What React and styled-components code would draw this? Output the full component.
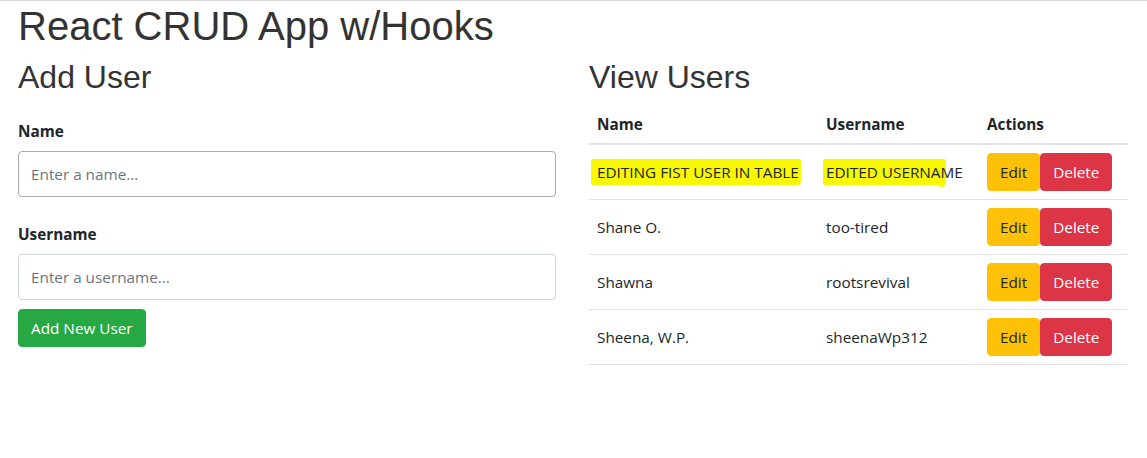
import React from "react";
import styled, { createGlobalStyle } from "styled-components";

const Global = createGlobalStyle`
  html, body { margin: 0; padding: 0; background: #fff; }
  body {
    font-family: "Open Sans", "Noto Sans", sans-serif;
    font-size: 16px;
    line-height: 24px;
    color: #212529;
    border-top: 1px solid #d9d9d9;
  }
  * { box-sizing: border-box; }
`;

const Container = styled.div`
  padding: 0 18px;
  width: 1146px;
`;

const Title = styled.h1`
  margin: 1px 0 8px;
  font-family: "Liberation Sans", Arial, sans-serif;
  font-weight: 400;
  font-size: 40px;
  line-height: 48px;
  color: #333;
`;

const Row = styled.div`
  display: grid;
  grid-template-columns: 538px 539px;
  column-gap: 33px;
`;

const Column = styled.section`
  display: flex;
  flex-direction: column;
`;

const SectionTitle = styled.h2`
  margin: 0 0 6px;
  font-family: "Liberation Sans", Arial, sans-serif;
  font-weight: 400;
  font-size: 32px;
  line-height: 38.4px;
  color: #333;
`;

const Form = styled.form`
  display: flex;
  flex-direction: column;
  padding-top: 17px;
`;

const Group = styled.div`
  display: flex;
  flex-direction: column;
  margin-bottom: ${(p) => p.$mb || 0}px;
`;

const Label = styled.label`
  font-weight: 700;
  font-size: 15.3px;
  margin-bottom: 8px;
`;

const Input = styled.input`
  height: 46px;
  width: 100%;
  padding: 0 12px;
  font-family: inherit;
  font-size: 15.3px;
  color: #495057;
  border: 1px solid ${(p) => (p.$dark ? "#a9a9a9" : "#ced4da")};
  border-radius: 4px;
  background: #fff;
  outline: none;
  &::placeholder { color: #6c757d; }
`;

const Button = styled.button`
  height: 38px;
  padding: 0 12px;
  font-family: inherit;
  font-size: 15.3px;
  line-height: 24px;
  border: 1px solid ${(p) => p.$bg};
  border-radius: 4px;
  background: ${(p) => p.$bg};
  color: ${(p) => p.$fg};
  cursor: pointer;
`;

const SubmitButton = styled(Button)`
  align-self: flex-start;
  margin-top: 9px;
`;

const Table = styled.table`
  width: 539px;
  margin-top: 1px;
  border-collapse: collapse;
  table-layout: fixed;
`;

const Th = styled.th`
  text-align: left;
  font-weight: 700;
  font-size: 15.3px;
  padding: 9px 8px 7px;
  border-bottom: 2px solid #dee2e6;
  width: ${(p) => p.$w}px;
`;

const Td = styled.td`
  padding: 8px;
  font-size: 15.3px;
  vertical-align: middle;
  border-bottom: 1px solid #dee2e6;
  white-space: nowrap;
`;

const Actions = styled.div`
  display: flex;
`;

const Highlight = styled.span`
  position: relative;
  display: inline-block;
  &::before {
    content: "";
    position: absolute;
    z-index: -1;
    left: ${(p) => p.$l}px;
    width: ${(p) => p.$w}px;
    top: -1px;
    bottom: -1px;
    background: #f8f800;
    border-radius: 3px 2px 4px 2px;
  }
  &::after {
    content: "";
    display: ${(p) => (p.$drip ? "block" : "none")};
    position: absolute;
    z-index: -1;
    left: ${(p) => p.$l + p.$w - 9}px;
    width: 9px;
    top: 12px;
    height: 15px;
    background: #f8f800;
    border-radius: 0 0 6px 6px;
  }
`;

const Cell = styled.div`
  position: relative;
  z-index: 0;
`;

const users = [
  { name: "Shane O.", username: "too-tired" },
  { name: "Shawna", username: "rootsrevival" },
  { name: "Sheena, W.P.", username: "sheenaWp312" },
];

function ActionButtons() {
  return (
    <Actions>
      <Button type="button" $bg="#ffc107" $fg="#212529">Edit</Button>
      <Button type="button" $bg="#dc3545" $fg="#fff">Delete</Button>
    </Actions>
  );
}

export default function App() {
  return (
    <>
      <Global />
      <Container>
        <Title>React CRUD App w/Hooks</Title>
        <Row>
          <Column>
            <SectionTitle>Add User</SectionTitle>
            <Form onSubmit={(e) => e.preventDefault()}>
              <Group $mb={25}>
                <Label>Name</Label>
                <Input $dark placeholder="Enter a name..." />
              </Group>
              <Group>
                <Label>Username</Label>
                <Input placeholder="Enter a username..." />
              </Group>
              <SubmitButton type="submit" $bg="#28a745" $fg="#fff">Add New User</SubmitButton>
            </Form>
          </Column>
          <Column>
            <SectionTitle>View Users</SectionTitle>
            <Table>
              <thead>
                <tr>
                  <Th $w={229}>Name</Th>
                  <Th $w={161}>Username</Th>
                  <Th $w={149}>Actions</Th>
                </tr>
              </thead>
              <tbody>
                <tr>
                  <Td>
                    <Cell>
                      <Highlight $l={-6} $w={210}>EDITING FIST USER IN TABLE</Highlight>
                    </Cell>
                  </Td>
                  <Td>
                    <Cell>
                      <Highlight $l={-3} $w={123} $drip>EDITED USERNAME</Highlight>
                    </Cell>
                  </Td>
                  <Td><ActionButtons /></Td>
                </tr>
                {users.map((u) => (
                  <tr key={u.username}>
                    <Td>{u.name}</Td>
                    <Td>{u.username}</Td>
                    <Td><ActionButtons /></Td>
                  </tr>
                ))}
              </tbody>
            </Table>
          </Column>
        </Row>
      </Container>
    </>
  );
}
